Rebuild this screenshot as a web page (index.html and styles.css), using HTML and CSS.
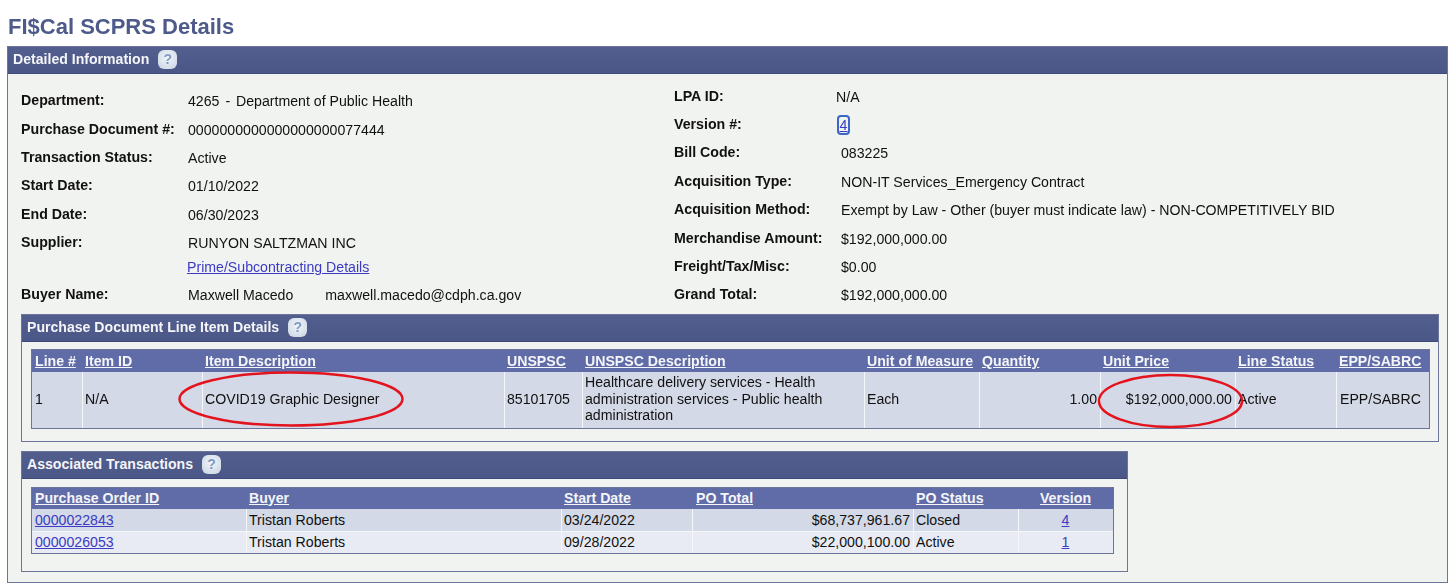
FILE: index.html
```html
<!DOCTYPE html>
<html lang="en">
<head>
<meta charset="utf-8">
<title>FI$Cal SCPRS Details</title>
<link rel="stylesheet" href="styles.css">
</head>
<body>
<h1 class="page-title">FI$Cal SCPRS Details</h1>
<section class="panel outer">
  <header class="panel-head"><span>Detailed Information</span><span class="help">?</span></header>
  <div class="outer-body">
    <div class="details">
      <dl class="fields fields-left">
        <dt>Department:</dt><dd>4265 <span class="dash">-</span> Department of Public Health</dd>
        <dt>Purchase Document #:</dt><dd>0000000000000000000077444</dd>
        <dt>Transaction Status:</dt><dd>Active</dd>
        <dt>Start Date:</dt><dd>01/10/2022</dd>
        <dt>End Date:</dt><dd>06/30/2023</dd>
        <dt>Supplier:</dt><dd>RUNYON SALTZMAN INC</dd>
        <dt></dt><dd class="sublink"><a href="#">Prime/Subcontracting Details</a></dd>
        <dt>Buyer Name:</dt><dd class="buyer"><span>Maxwell Macedo</span><span>maxwell.macedo@cdph.ca.gov</span></dd>
      </dl>
      <dl class="fields fields-right">
        <dt>LPA ID:</dt><dd class="shift-left">N/A</dd>
        <dt>Version #:</dt><dd class="shift-left"><a href="#" class="focused">4</a></dd>
        <dt>Bill Code:</dt><dd>083225</dd>
        <dt>Acquisition Type:</dt><dd>NON-IT Services_Emergency Contract</dd>
        <dt>Acquisition Method:</dt><dd>Exempt by Law - Other (buyer must indicate law) - NON-COMPETITIVELY BID</dd>
        <dt>Merchandise Amount:</dt><dd>$192,000,000.00</dd>
        <dt>Freight/Tax/Misc:</dt><dd>$0.00</dd>
        <dt>Grand Total:</dt><dd>$192,000,000.00</dd>
      </dl>
    </div>

    <section class="panel inner line-panel">
      <header class="panel-head"><span>Purchase Document Line Item Details</span><span class="help">?</span></header>
      <div class="inner-body">
        <table class="grid line-grid">
          <colgroup>
            <col class="l1"><col class="l2"><col class="l3"><col class="l4"><col class="l5"><col class="l6"><col class="l7"><col class="l8"><col class="l9"><col class="l10">
          </colgroup>
          <thead>
            <tr>
              <th><a href="#">Line #</a></th><th><a href="#">Item ID</a></th><th><a href="#">Item Description</a></th><th><a href="#">UNSPSC</a></th><th><a href="#">UNSPSC Description</a></th><th><a href="#">Unit of Measure</a></th><th><a href="#">Quantity</a></th><th><a href="#">Unit Price</a></th><th><a href="#">Line Status</a></th><th><a href="#">EPP/SABRC</a></th>
            </tr>
          </thead>
          <tbody>
            <tr class="odd tall">
              <td>1</td><td>N/A</td><td>COVID19 Graphic Designer</td><td>85101705</td><td>Healthcare delivery services - Health administration services - Public health administration</td><td>Each</td><td class="num">1.00</td><td class="num">$192,000,000.00</td><td>Active</td><td class="last-cell">EPP/SABRC</td>
            </tr>
          </tbody>
        </table>
      </div>
      <svg class="marks" viewBox="0 0 1418 127" aria-hidden="true">
        <ellipse cx="270" cy="85" rx="111.5" ry="26.5"/>
        <ellipse cx="1149.5" cy="87" rx="71.5" ry="26"/>
      </svg>
    </section>

    <section class="panel inner assoc-panel">
      <header class="panel-head"><span>Associated Transactions</span><span class="help">?</span></header>
      <div class="inner-body">
        <table class="grid assoc-grid">
          <colgroup>
            <col class="a1"><col class="a2"><col class="a3"><col class="a4"><col class="a5"><col class="a6">
          </colgroup>
          <thead>
            <tr>
              <th><a href="#">Purchase Order ID</a></th><th><a href="#">Buyer</a></th><th><a href="#">Start Date</a></th><th class="pad-total"><a href="#">PO Total</a></th><th><a href="#">PO Status</a></th><th class="center"><a href="#">Version</a></th>
            </tr>
          </thead>
          <tbody>
            <tr class="odd">
              <td><a href="#">0000022843</a></td><td>Tristan Roberts</td><td>03/24/2022</td><td class="num">$68,737,961.67</td><td>Closed</td><td class="center"><a href="#">4</a></td>
            </tr>
            <tr class="even">
              <td><a href="#">0000026053</a></td><td>Tristan Roberts</td><td>09/28/2022</td><td class="num">$22,000,100.00</td><td>Active</td><td class="center"><a href="#">1</a></td>
            </tr>
          </tbody>
        </table>
      </div>
    </section>
  </div>
</section>
</body>
</html>
```

FILE: styles.css
```css
* { box-sizing: border-box; }

html, body { height: 100%; }

body {
  margin: 0;
  padding: 15px 2px 0 7px;
  background: #fff;
  color: #111;
  font-family: "Liberation Sans", Arial, sans-serif;
  font-size: 14.15px;
  overflow: hidden;
  filter: blur(0.35px);
}

a { color: #3b3bc4; }

.page-title {
  margin: 0 0 7px 1px;
  font-size: 22px;
  line-height: 24px;
  color: #4d5a8a;
}

.panel { border: 1px solid #6d7399; background: #f1f3f0; }

.panel-head {
  display: flex;
  align-items: center;
  gap: 9px;
  background: linear-gradient(#525e8e, #4b5786);
  color: #f4f5f8;
  font-weight: bold;
  font-size: 14.1px;
  border-bottom: 1px solid #3f4a7c;
  padding: 0 0 2px 5px;
}

.outer { height: 537px; }
.outer > .panel-head { height: 27px; }

.help {
  display: inline-flex;
  align-items: center;
  justify-content: center;
  width: 19px;
  height: 19px;
  border-radius: 6px;
  background: radial-gradient(circle at 50% 40%, #f2f5f9, #c8d4e2);
  color: #7d9cc4;
  font-size: 14px;
  font-weight: bold;
}

.outer-body { padding: 0 9px 0 13px; }

.details {
  display: grid;
  grid-template-columns: 653px 1fr;
  height: 240px;
}

.fields {
  margin: 0;
  display: grid;
  grid-auto-rows: 28.4px;
  align-items: center;
}

.fields-left {
  grid-template-columns: 167px 1fr;
  grid-template-rows: repeat(6, 28.4px) 23.6px 28.4px;
  padding-top: 13px;
}

.fields-right { grid-template-columns: 167px 1fr; padding-top: 8.5px; }

dt { font-weight: bold; font-size: 14.2px; margin-top: -2px; }
dd { margin: 0; white-space: nowrap; }

.dash { margin: 0 2px; }
.sublink { margin-left: -1px; padding-bottom: 4px; }
.buyer { display: flex; gap: 32px; }
.shift-left { margin-left: -5px; }

.focused {
  display: inline-block;
  width: 13px;
  height: 20px;
  line-height: 16px;
  text-align: center;
  border: 2px solid #3a66c8;
  border-radius: 4px;
  margin-left: 1px;
}

.inner { position: relative; }
.inner > .panel-head { height: 27px; }
.inner-body { padding: 7px 9px 0 9px; }
.assoc-panel .inner-body { padding-top: 8px; }

.line-panel { height: 128px; width: 1418px; }
.assoc-panel { height: 121px; width: 1107px; margin-top: 9px; }

.grid {
  border-collapse: separate;
  border-spacing: 0;
  table-layout: fixed;
  border: 1px solid #6d7399;
}

.line-grid { width: 1399px; }
.assoc-grid { width: 1083px; }

.l1 { width: 50px; } .l2 { width: 120px; } .l3 { width: 302px; } .l4 { width: 78px; } .l5 { width: 282px; }
.l6 { width: 115px; } .l7 { width: 121px; } .l8 { width: 135px; } .l9 { width: 101px; } .l10 { width: 93px; }

.a1 { width: 214px; } .a2 { width: 315px; } .a3 { width: 131px; } .a4 { width: 221px; } .a5 { width: 105px; } .a6 { width: 95px; }

th {
  height: 22px;
  padding: 0 3px;
  background: #606ca8;
  text-align: left;
  white-space: nowrap;
}

th a { color: #f4f5f8; }

.pad-total { padding-left: 4px; }
.assoc-grid th { height: 21px; padding-bottom: 2px; }

td {
  padding: 0 3px 0 2px;
  line-height: 16.5px;
  border-left: 1px solid #f4f6f8;
  vertical-align: middle;
}

td:first-child { border-left: 0; padding-left: 3px; }
td.last-cell { padding-left: 3px; }

.tall td { height: 56px; padding-bottom: 2px; }
.odd td { background: #d3d9e6; }
.even td { background: #e8ebf3; border-top: 1px solid #f4f6f8; }
.assoc-grid td { height: 22px; }

.num { text-align: right; white-space: nowrap; }
.center { text-align: center; }

.marks {
  position: absolute;
  left: -1px;
  top: -1px;
  width: 1418px;
  height: 127px;
  pointer-events: none;
}

.marks ellipse { fill: none; stroke: #e4141f; stroke-width: 2.5; }
```
